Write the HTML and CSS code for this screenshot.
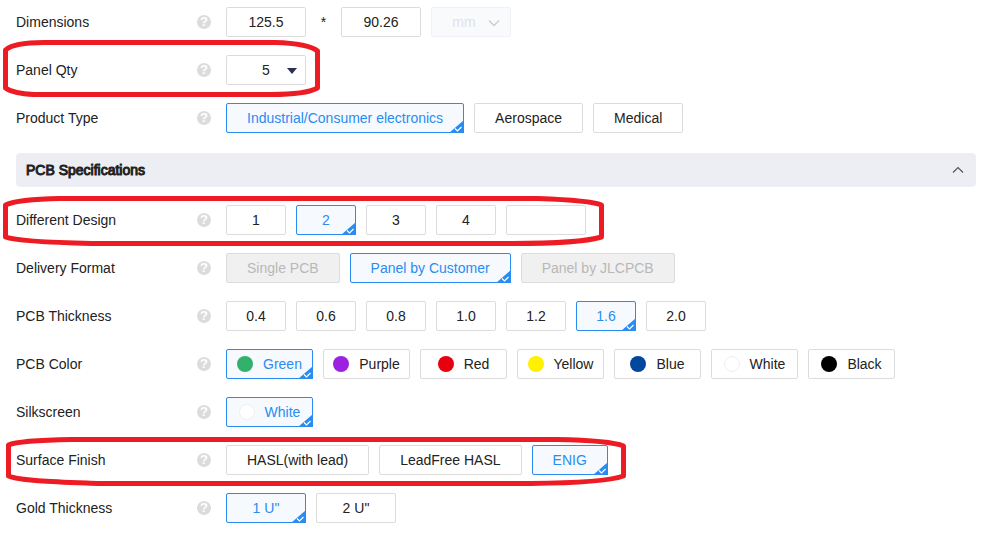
FILE: index.html
```html
<!DOCTYPE html>
<html lang="en">
<head>
<meta charset="utf-8">
<meta name="viewport" content="width=device-width, initial-scale=1">
<title>PCB order options</title>
<link rel="stylesheet" href="styles.css">
</head>
<body>
<svg class="symbols" aria-hidden="true">
  <symbol id="tick" viewBox="0 0 15 13"><path d="M15 0V13H0Z" fill="#2a8cf0"/><path d="M6 8.500 8.500 11 12.500 7" fill="none" stroke="#fff" stroke-width="1.200"/></symbol>
</svg>
<form class="spec-form">
  <div class="row">
    <label class="row-label" for="width">Dimensions</label>
    <span class="help">?</span>
    <div class="controls joined">
      <input class="box" id="width" type="text" value="125.5">
      <span class="times">*</span>
      <input class="box" type="text" value="90.26" aria-label="Height">
      <span class="select unit">
        <select class="box" aria-label="Unit" disabled><option>mm</option></select>
        <svg class="select-icon" viewBox="0 0 12 8" aria-hidden="true"><path d="M1 1.500 6 6.500 11 1.500" fill="none" stroke="#c8cbd2" stroke-width="1.300"/></svg>
      </span>
    </div>
  </div>

  <div class="row">
    <label class="row-label" for="qty">Panel Qty</label>
    <span class="help">?</span>
    <div class="controls">
      <span class="select">
        <select class="box" id="qty"><option>5</option></select>
        <svg class="select-icon caret" viewBox="0 0 10 6" aria-hidden="true"><path d="M0 0H10L5 6Z" fill="#2c3150"/></svg>
      </span>
    </div>
    <svg class="mark mark-qty" viewBox="0 37 324 63" aria-hidden="true"><path d="M5.500 50C11 45 22 42.500 44 42.500H275C295 43 310 45 317.500 51V88C310 92 295 94.500 272 94.500H34C22 94 11 92 5.500 88Z"/></svg>
  </div>

  <div class="row" role="group" aria-labelledby="l-type">
    <span class="row-label" id="l-type">Product Type</span>
    <span class="help">?</span>
    <div class="controls">
      <button type="button" class="option selected" aria-pressed="true">Industrial/Consumer electronics<svg class="tick" aria-hidden="true"><use href="#tick"/></svg></button>
      <button type="button" class="option">Aerospace</button>
      <button type="button" class="option">Medical</button>
    </div>
  </div>

  <button type="button" class="section" aria-expanded="true">
    <span class="section-title">PCB Specifications</span>
    <svg class="section-icon" viewBox="0 0 12 8" aria-hidden="true"><path d="M1 6.500 6 1.500 11 6.500" fill="none" stroke="#555" stroke-width="1.200"/></svg>
  </button>

  <div class="row" role="group" aria-labelledby="l-design">
    <span class="row-label" id="l-design">Different Design</span>
    <span class="help">?</span>
    <div class="controls">
      <button type="button" class="option small">1</button>
      <button type="button" class="option small selected" aria-pressed="true">2<svg class="tick" aria-hidden="true"><use href="#tick"/></svg></button>
      <button type="button" class="option small">3</button>
      <button type="button" class="option small">4</button>
      <input class="box" type="text" aria-label="Other number of designs">
    </div>
    <svg class="mark mark-design" viewBox="0 192 608 57" aria-hidden="true"><path d="M5.500 205C14 201 30 199 60 198.500H538C565 199.500 592 201 601.500 205V237C588 241 560 243.500 512 243.500H92C50 242.500 16 241 5.500 237Z"/></svg>
  </div>

  <div class="row" role="group" aria-labelledby="l-format">
    <span class="row-label" id="l-format">Delivery Format</span>
    <span class="help">?</span>
    <div class="controls">
      <button type="button" class="option" disabled>Single PCB</button>
      <button type="button" class="option selected" aria-pressed="true">Panel by Customer<svg class="tick" aria-hidden="true"><use href="#tick"/></svg></button>
      <button type="button" class="option" disabled>Panel by JLCPCB</button>
    </div>
  </div>

  <div class="row" role="group" aria-labelledby="l-thick">
    <span class="row-label" id="l-thick">PCB Thickness</span>
    <span class="help">?</span>
    <div class="controls">
      <button type="button" class="option small">0.4</button>
      <button type="button" class="option small">0.6</button>
      <button type="button" class="option small">0.8</button>
      <button type="button" class="option small">1.0</button>
      <button type="button" class="option small">1.2</button>
      <button type="button" class="option small selected" aria-pressed="true">1.6<svg class="tick" aria-hidden="true"><use href="#tick"/></svg></button>
      <button type="button" class="option small">2.0</button>
    </div>
  </div>

  <div class="row" role="group" aria-labelledby="l-color">
    <span class="row-label" id="l-color">PCB Color</span>
    <span class="help">?</span>
    <div class="controls">
      <button type="button" class="option color selected" aria-pressed="true"><span class="dot green"></span>Green<svg class="tick" aria-hidden="true"><use href="#tick"/></svg></button>
      <button type="button" class="option color"><span class="dot purple"></span>Purple</button>
      <button type="button" class="option color"><span class="dot red"></span>Red</button>
      <button type="button" class="option color"><span class="dot yellow"></span>Yellow</button>
      <button type="button" class="option color"><span class="dot blue"></span>Blue</button>
      <button type="button" class="option color"><span class="dot white"></span>White</button>
      <button type="button" class="option color"><span class="dot black"></span>Black</button>
    </div>
  </div>

  <div class="row" role="group" aria-labelledby="l-silk">
    <span class="row-label" id="l-silk">Silkscreen</span>
    <span class="help">?</span>
    <div class="controls">
      <button type="button" class="option color selected" aria-pressed="true"><span class="dot white"></span>White<svg class="tick" aria-hidden="true"><use href="#tick"/></svg></button>
    </div>
  </div>

  <div class="row" role="group" aria-labelledby="l-finish">
    <span class="row-label" id="l-finish">Surface Finish</span>
    <span class="help">?</span>
    <div class="controls">
      <button type="button" class="option">HASL(with lead)</button>
      <button type="button" class="option">LeadFree HASL</button>
      <button type="button" class="option selected" aria-pressed="true">ENIG<svg class="tick" aria-hidden="true"><use href="#tick"/></svg></button>
    </div>
    <svg class="mark mark-finish" viewBox="0 433 630 57" aria-hidden="true"><path d="M8.500 445C16 441.500 40 440 72 439.500H557C585 440 614 442 623.500 446V476C612 480 580 483 531 483.500H98C60 482 20 481 8.500 476Z"/></svg>
  </div>

  <div class="row" role="group" aria-labelledby="l-gold">
    <span class="row-label" id="l-gold">Gold Thickness</span>
    <span class="help">?</span>
    <div class="controls">
      <button type="button" class="option medium selected" aria-pressed="true">1 U"<svg class="tick" aria-hidden="true"><use href="#tick"/></svg></button>
      <button type="button" class="option medium">2 U"</button>
    </div>
  </div>
</form>
</body>
</html>
```
FILE: styles.css
```css
* {
  box-sizing: border-box;
}

body {
  margin: 0;
  background: #fff;
  color: #222;
  font: 14px/20px "Liberation Sans", Arial, sans-serif;
}

button,
input,
select {
  margin: 0;
  font: inherit;
  color: inherit;
}

.symbols {
  position: absolute;
  width: 0;
  height: 0;
}

.spec-form {
  display: flex;
  flex-direction: column;
  gap: 18px;
  padding: 7px 8px 12px 16px;
}

.row {
  position: relative;
  display: grid;
  grid-template-columns: 181px 14px 1fr;
  align-items: center;
}

.help {
  height: 14px;
  border-radius: 50%;
  background: #dcdcdc;
  color: #fff;
  font-size: 13px;
  font-weight: bold;
  line-height: 14px;
  text-align: center;
}

.controls {
  display: flex;
  flex-wrap: wrap;
  gap: 10px;
  padding-left: 15px;
}

.joined {
  gap: 0;
}

.times {
  width: 35px;
  line-height: 30px;
  text-align: center;
}

.box,
.option {
  height: 30px;
  border: 1px solid #dcdcdc;
  border-radius: 2px;
  background: #fff;
}

.box {
  width: 80px;
  padding: 0;
  text-align: center;
}

.select {
  position: relative;
  display: block;
}

.select .box {
  display: block;
  appearance: none;
  text-align-last: center;
  opacity: 1;
}

.unit {
  margin-left: 10px;
}

.unit .box {
  padding-right: 14px;
  border-color: #f0f2f5;
  background: #f9fafc;
  color: #dfe1e6;
}

.select-icon {
  position: absolute;
  top: 12px;
  right: 11px;
  width: 12px;
  height: 8px;
  pointer-events: none;
}

.caret {
  top: 13px;
  right: 9px;
  width: 10px;
  height: 6px;
}

.option {
  position: relative;
  display: flex;
  align-items: center;
  justify-content: center;
  padding: 0 20px;
  white-space: nowrap;
}

.option:disabled {
  background: #f0f0f0;
  color: #b8b8b8;
}

.selected {
  border-color: #2a8cf0;
  background: #f6faff;
  color: #2a8cf0;
}

.small {
  width: 60px;
  padding: 0;
}

.medium {
  width: 80px;
  padding: 0;
}

.color {
  gap: 10px;
  width: 87px;
  padding: 0;
}

.tick {
  position: absolute;
  right: -1px;
  bottom: -1px;
  width: 15px;
  height: 13px;
}

.dot {
  width: 16px;
  height: 16px;
  border-radius: 50%;
}

.green { background: #32b16c; }
.purple { background: #9b22de; }
.red { background: #e8000f; }
.yellow { background: #fff100; }
.blue { background: #00479d; }
.white { border: 1px solid #f0f0f0; background: #fff; }
.black { background: #000; }

.section {
  display: flex;
  align-items: center;
  justify-content: space-between;
  height: 34px;
  margin-top: 2px;
  padding: 0 12px 0 10px;
  border: 0;
  border-radius: 4px;
  background: #edeef4;
}

.section-title {
  -webkit-text-stroke: 1px #222;
}

.section-icon {
  width: 12px;
  height: 8px;
}

.mark {
  position: absolute;
  left: -16px;
  fill: none;
  stroke: #ed1c24;
  stroke-width: 5px;
  stroke-linejoin: round;
  pointer-events: none;
}

.mark-qty {
  top: -18px;
  width: 324px;
  height: 63px;
}

.mark-design {
  top: -13px;
  width: 608px;
  height: 57px;
}

.mark-finish {
  top: -12px;
  width: 630px;
  height: 57px;
}
```
